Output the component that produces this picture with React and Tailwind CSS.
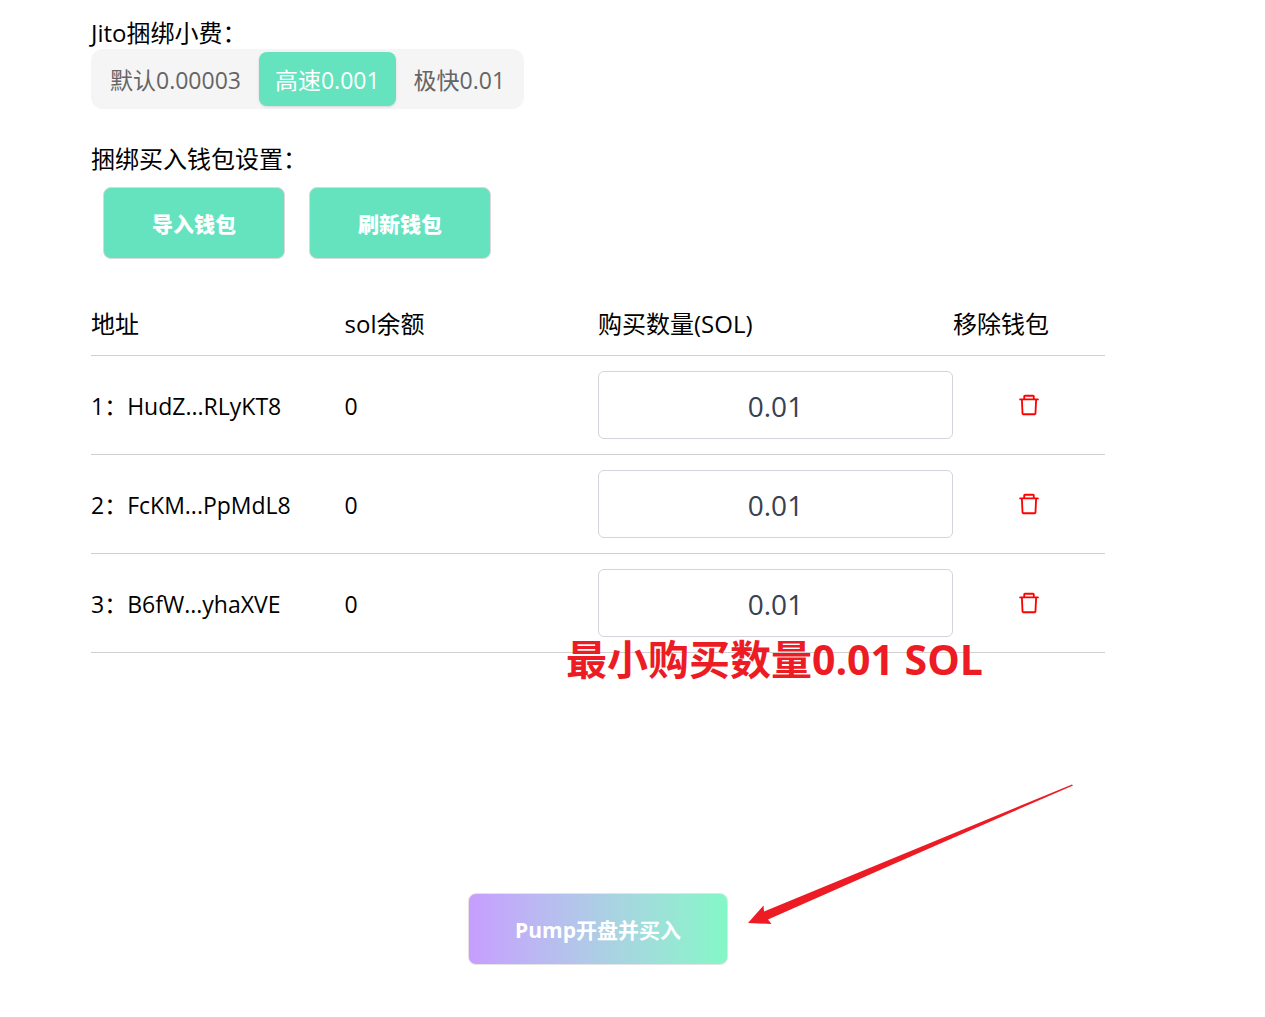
import { useState } from "react";
import { AiOutlineDelete } from "react-icons/ai";

const tips = [
  { value: "default", label: "默认0.00003" },
  { value: "fast", label: "高速0.001" },
  { value: "turbo", label: "极快0.01" },
];

const wallets = ["HudZ...RLyKT8", "FcKM...PpMdL8", "B6fW...yhaXVE"];

function TipPicker() {
  const [tip, setTip] = useState("fast");
  return (
    <fieldset>
      <legend>Jito捆绑小费：</legend>
      <div className="inline-flex gap-0.5 rounded-xl bg-[#f5f5f5] p-[3px] align-top">
        {tips.map((t) => (
          <label
            key={t.value}
            className="flex h-[54px] cursor-pointer items-center rounded-lg px-4 pt-0.5 text-[23px] text-[#656565] has-checked:bg-[#65e3be] has-checked:text-white has-checked:shadow-sm"
          >
            <input
              type="radio"
              name="tip"
              value={t.value}
              checked={tip === t.value}
              onChange={() => setTip(t.value)}
              className="sr-only"
            />
            {t.label}
          </label>
        ))}
      </div>
    </fieldset>
  );
}

function WalletButton({ children }) {
  return (
    <button
      type="button"
      className="h-[72px] rounded-lg border border-[#d9d9d9] bg-[#65e3be] px-12 pt-0.5 text-[21px] font-extrabold text-white"
    >
      {children}
    </button>
  );
}

export default function App() {
  return (
    <main className="min-h-screen bg-white pt-[17px] pr-40 pb-[52px] pl-[91px] font-['Open_Sans','Noto_Sans_CJK_SC',sans-serif] text-2xl leading-8 text-black">
      <TipPicker />

      <h2 className="mt-[34px]">捆绑买入钱包设置：</h2>
      <div className="mt-3 flex gap-6 pl-3">
        <WalletButton>导入钱包</WalletButton>
        <WalletButton>刷新钱包</WalletButton>
      </div>

      <div className="relative mt-[34px]">
        <table className="w-full table-fixed border-collapse text-left">
          <thead>
            <tr className="border-b border-[#d0d0d0]">
              <th className="w-1/4 py-[15px] font-normal">地址</th>
              <th className="w-1/4 font-normal">sol余额</th>
              <th className="w-[35%] font-normal">购买数量(SOL)</th>
              <th className="w-[15%] font-normal">移除钱包</th>
            </tr>
          </thead>
          <tbody>
            {wallets.map((w, i) => (
              <tr key={w} className="border-b border-[#d0d0d0] text-[23px]">
                <td className="pt-0.5 whitespace-nowrap">
                  {i + 1}：{w}
                </td>
                <td className="pt-0.5">0</td>
                <td className="py-[15px]">
                  <input
                    type="text"
                    defaultValue="0.01"
                    aria-label="购买数量(SOL)"
                    className="block h-[68px] w-full rounded-md border border-[#d1d5db] pt-0.5 text-center text-[28px] text-[#374151]"
                  />
                </td>
                <td>
                  <button type="button" aria-label="移除钱包" className="mx-auto block text-[#ff0000]">
                    <AiOutlineDelete size={26} />
                  </button>
                </td>
              </tr>
            ))}
          </tbody>
        </table>
        <p className="absolute top-full right-[122px] -mt-[22px] text-[41px] leading-[56px] font-bold whitespace-nowrap text-[#ed1c24]">
          最小购买数量0.01 SOL
        </p>
      </div>

      <div className="mt-60 flex justify-center">
        <div className="relative">
          <button
            type="button"
            className="block h-[72px] rounded-lg border border-[#e4e4e4] bg-linear-to-r from-[#c79dff] to-[#82f8c6] bg-origin-border px-[46px] pt-0.5 text-[21px] font-bold text-white"
          >
            Pump开盘并买入
          </button>
          <svg
            className="absolute bottom-10 left-full ml-5"
            width="326"
            height="142"
            viewBox="0 0 326 142"
            fill="#ed1c24"
            aria-hidden="true"
          >
            <path d="M0 140 15.500 122.500 16 128.500 324 1.500 325 2.500Q172 69 20 136.500L23.500 141Z" />
          </svg>
        </div>
      </div>
    </main>
  );
}
